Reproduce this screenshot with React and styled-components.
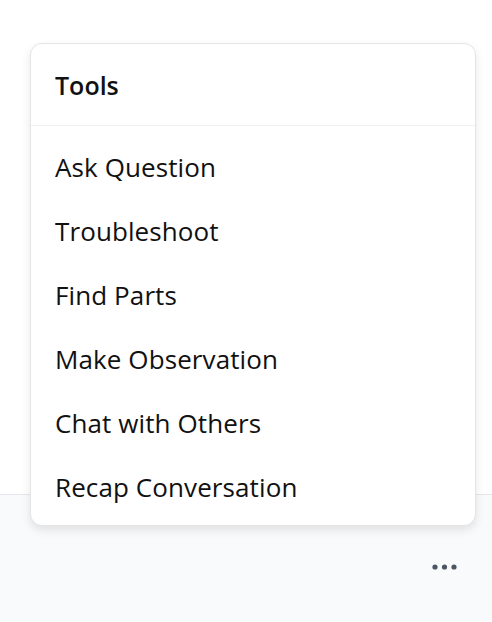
import React from 'react';
import styled, { createGlobalStyle } from 'styled-components';

const GlobalStyle = createGlobalStyle`
  html, body, #root {
    margin: 0;
    padding: 0;
    height: 100%;
  }
  body {
    font-family: 'Open Sans', 'Noto Sans', 'Liberation Sans', sans-serif;
    color: #111111;
    background: #ffffff;
  }
`;

const Page = styled.div`
  display: flex;
  flex-direction: column;
  height: 100vh;
`;

const Main = styled.div`
  flex: 1;
  background: #ffffff;
`;

const Footer = styled.div`
  position: relative;
  height: 128px;
  box-sizing: border-box;
  border-top: 1px solid #e5e7eb;
  background: #f9fafb;
  display: flex;
  justify-content: flex-end;
  align-items: flex-start;
  padding: 52px 27px 0 0;
`;

const MoreButton = styled.button`
  width: 40px;
  height: 40px;
  border: none;
  background: transparent;
  display: flex;
  align-items: center;
  justify-content: center;
  padding: 0;
  cursor: pointer;
`;

const Menu = styled.div`
  position: absolute;
  left: 30px;
  right: 16px;
  bottom: 96px;
  background: #ffffff;
  border: 1px solid #e5e5e5;
  border-radius: 12px;
  box-shadow: 0 4px 10px rgba(0, 0, 0, 0.1);
  overflow: hidden;
`;

const MenuHeader = styled.div`
  height: 81px;
  display: flex;
  align-items: center;
  padding: 0 24px;
  border-bottom: 1px solid #f0f0f0;
  font-size: 25px;
  font-weight: 600;
`;

const MenuList = styled.div`
  padding: 9px 0 6px;
`;

const MenuItem = styled.div`
  height: 64px;
  display: flex;
  align-items: center;
  padding: 0 24px;
  font-size: 26px;
  letter-spacing: 0.1px;
  color: #111111;
  cursor: pointer;
`;

const tools = [
  'Ask Question',
  'Troubleshoot',
  'Find Parts',
  'Make Observation',
  'Chat with Others',
  'Recap Conversation',
];

const Dots = () => (
  <svg width="26" height="6" viewBox="0 0 26 6">
    <circle cx="3" cy="3" r="2.6" fill="#4b5563" />
    <circle cx="12.5" cy="3" r="2.6" fill="#4b5563" />
    <circle cx="22" cy="3" r="2.6" fill="#4b5563" />
  </svg>
);

export default function App() {
  return (
    <Page>
      <GlobalStyle />
      <Main />
      <Footer>
        <Menu>
          <MenuHeader>Tools</MenuHeader>
          <MenuList>
            {tools.map((t) => (
              <MenuItem key={t}>{t}</MenuItem>
            ))}
          </MenuList>
        </Menu>
        <MoreButton>
          <Dots />
        </MoreButton>
      </Footer>
    </Page>
  );
}
